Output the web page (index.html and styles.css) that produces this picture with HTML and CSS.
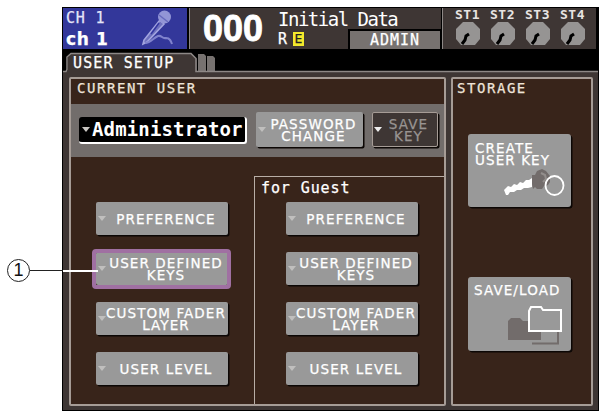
FILE: index.html
```html
<!DOCTYPE html>
<html lang="en">
<head>
<meta charset="utf-8">
<title>User Setup</title>
<link rel="stylesheet" href="styles.css">
</head>
<body>
<main class="screen">
  <header class="topbar">
    <section class="channel">
      <div><p class="ch-id">CH 1</p><p class="ch-name">ch 1</p></div>
      <svg class="mic" width="34" height="38" viewBox="0 0 34 38">
        <path d="M20 11 4 31l-1 4 4-2L24 15z" fill="#6d70bd" stroke="#a3a5e0" stroke-width="1.6"/>
        <path d="m19 14-8 11" stroke="#3336a0" stroke-width="1.5"/>
        <circle cx="24.500" cy="8" r="6.500" fill="#9295d6"/>
        <path d="m19 6 9 7" stroke="#6669bd" stroke-width="1.5"/>
        <path d="M5 34c6 0 8-5 13-7 4-1 4 3 8 2 4 0 5 3 6 6" fill="none" stroke="#8083cd" stroke-width="2"/>
      </svg>
    </section>
    <section class="scene">
      <div class="scene-no">000</div>
      <div class="scene-info">
        <p class="scene-title">Initial Data</p>
        <div class="scene-row"><span class="flag-r">R</span><span class="flag-e">E</span><span class="admin">ADMIN</span></div>
      </div>
    </section>
    <section class="stereo">
      <div class="st"><span>ST1</span><svg width="24" height="24" viewBox="0 0 24 24"><path class="knob" d="M7 0h10l7 7v10l-5 6H5l-5-6V7z"/><path class="needle" d="m13 12-3 2-1 4-3 4"/></svg></div>
      <div class="st"><span>ST2</span><svg width="24" height="24" viewBox="0 0 24 24"><path class="knob" d="M7 0h10l7 7v10l-5 6H5l-5-6V7z"/><path class="needle" d="m13 12-3 2-1 4-3 4"/></svg></div>
      <div class="st"><span>ST3</span><svg width="24" height="24" viewBox="0 0 24 24"><path class="knob" d="M7 0h10l7 7v10l-5 6H5l-5-6V7z"/><path class="needle" d="m13 12-3 2-1 4-3 4"/></svg></div>
      <div class="st"><span>ST4</span><svg width="24" height="24" viewBox="0 0 24 24"><path class="knob" d="M7 0h10l7 7v10l-5 6H5l-5-6V7z"/><path class="needle" d="m13 12-3 2-1 4-3 4"/></svg></div>
    </section>
  </header>
  <nav class="tabs">
    <svg class="tab-shape" width="535" height="21" viewBox="0 0 535 21">
      <path d="M0 20h3l2-2V5l3-4h120l6 6v13h401v1H0z" fill="#3e3634"/>
      <path d="M135 2h6l2 2v15h-8zM144 4h6l2 2v13h-8z" fill="#777270"/>
      <path d="M0 19.500h3l1-2V5l4-3.500h120l5 5v13h402" fill="none" stroke="#8d8886" stroke-width="1.500"/>
    </svg>
    <span class="tab-label">USER SETUP</span>
  </nav>
  <div class="body">
    <section class="panel current">
      <h2>CURRENT USER</h2>
      <div class="band">
        <div class="user-name"><i class="arrow"></i><span>Administrator</span></div>
        <button class="btn password"><i class="arrow"></i><span>PASSWORD<br>CHANGE</span></button>
        <button class="btn savekey"><i class="arrow"></i><span>SAVE<br>KEY</span></button>
      </div>
      <div class="columns">
        <div class="col own">
          <button class="btn"><i class="arrow"></i><span>PREFERENCE</span></button>
          <button class="btn selected"><i class="arrow"></i><span>USER DEFINED<br>KEYS</span></button>
          <button class="btn"><i class="arrow"></i><span>CUSTOM FADER<br>LAYER</span></button>
          <button class="btn"><i class="arrow"></i><span>USER LEVEL</span></button>
        </div>
        <div class="col guest">
          <h3>for Guest</h3>
          <button class="btn"><i class="arrow"></i><span>PREFERENCE</span></button>
          <button class="btn"><i class="arrow"></i><span>USER DEFINED<br>KEYS</span></button>
          <button class="btn"><i class="arrow"></i><span>CUSTOM FADER<br>LAYER</span></button>
          <button class="btn"><i class="arrow"></i><span>USER LEVEL</span></button>
        </div>
      </div>
    </section>
    <section class="panel storage">
      <h2>STORAGE</h2>
      <button class="btn tile"><span>CREATE<br>USER KEY</span>
        <svg width="62" height="30" viewBox="0 0 62 30">
          <path d="m1 21 4-4 3 1 3-3 3 1 3-3 3 1 3-3 3 0 3-2v9l-4 1-4 0-3 2-4 0-3 2-4 0-2 3H3z" fill="#fff"/>
          <path d="M29 6h3l2-4 5-2 4 2 4 5v6l-2 3-4 1-2 3h-5l-2-2-2 2-1-5z" fill="#726c6b"/>
          <path d="M38 4l4 2 1 4-3 3" stroke="#938e8c" stroke-width="2" fill="none"/>
          <ellipse cx="51.500" cy="16.500" rx="9" ry="9.500" fill="none" stroke="#fff" stroke-width="1.800"/>
        </svg>
      </button>
      <button class="btn tile load"><span>SAVE/LOAD</span>
        <svg width="56" height="40" viewBox="0 0 56 40">
          <path d="M25 37.500h26V24" fill="none" stroke="#726c6b" stroke-width="2"/>
          <path d="M1 34V15l3-3h9l3 3h18v19z" fill="#726c6b"/>
          <path d="M22 25V5l2-4h10l2 3h18v21z" fill="#999" stroke="#fff" stroke-width="2"/>
        </svg>
      </button>
    </section>
  </div>
</main>
<div class="callout"><span class="callout-no">1</span><i class="lead"></i><i class="lead-light"></i></div>
</body>
</html>
```

FILE: styles.css
```css
* { box-sizing: border-box; margin: 0; padding: 0; }
body { position: relative; width: 601px; height: 412px; overflow: hidden; background: #fff; color: #fff; font-family: "DejaVu Sans", sans-serif; }
svg { display: block; flex: none; }
.screen { width: 537px; height: 404px; margin: 7px 0 0 62px; padding: 1px 1px 1px; background: #000; display: flex; flex-direction: column; -webkit-text-stroke: 0.25px currentColor; }

.topbar { height: 41px; display: flex; flex: none; }
.channel { width: 124px; background: #33379a; display: flex; justify-content: space-between; padding: 0 13px 0 3px; font-family: "DejaVu Sans Mono", monospace; }
.ch-id { font-size: 15px; line-height: 20px; letter-spacing: 0.8px; color: #e4e4f8; }
.ch-name { font-family: "DejaVu Sans", sans-serif; font-weight: bold; font-size: 17px; line-height: 22px; letter-spacing: 0.6px; white-space: nowrap; }
.mic { margin-top: 1px; }
.scene { width: 252px; margin-left: 2px; border-left: 1px solid #8d8886; background: #3e3634; display: flex; padding-left: 13px; }
.scene-no { width: 75px; font: bold 36px/41px "Liberation Sans", sans-serif; letter-spacing: 0; -webkit-text-stroke: 0.8px #fff; }
.scene-info { flex: 1; font-family: "DejaVu Sans Mono", monospace; }
.scene-title { font-size: 19px; line-height: 22px; letter-spacing: -1.5px; height: 21px; white-space: nowrap; -webkit-text-stroke: 0; }
.scene-row { display: flex; height: 20px; }
.flag-r { width: 15px; font-size: 15px; line-height: 20px; }
.flag-e { width: 11px; height: 14px; margin-top: 3px; background: #f3e92c; color: #222; font-size: 13px; line-height: 14px; text-align: center; }
.admin { width: 93px; margin-left: auto; border: solid #000; border-width: 2px 1px 0 2px; background: #777270; font-size: 15px; line-height: 19px; letter-spacing: 1px; text-align: center; }
.stereo { width: 154px; margin-left: 1px; border-left: 1px solid #8d8886; background: #3e3634; display: flex; padding-left: 7px; }
.st { width: 35px; display: flex; flex-direction: column; align-items: center; letter-spacing: 0.5px; color: #e8e4e2; font-weight: bold; -webkit-text-stroke: 0; }
.st span { height: 14px; font-family: "DejaVu Sans Mono", monospace; font-size: 13px; line-height: 13px; }
.knob { fill: #969493; }
.needle { fill: none; stroke: #000; stroke-width: 3; }

.tabs { position: relative; height: 23px; padding-top: 3px; flex: none; }
.tab-label { position: absolute; left: 10px; top: 5px; font: 15px/19px "DejaVu Sans Mono", monospace; letter-spacing: 1.1px; }

.body { height: 338px; background: #3e3634; display: flex; gap: 5px; padding: 5px 4px 4px 6px; }
.panel { border: 2px solid #a69c96; border-radius: 2px; background: #38241a; }
.current { width: 377px; }
.storage { width: 142px; }
h2 { height: 25px; padding-left: 6px; color: #eee3d8; font: 14px/19px "DejaVu Sans Mono", monospace; letter-spacing: 1.55px; white-space: nowrap; }
.band { height: 53px; background: #726d6b; display: flex; align-items: flex-start; padding: 8px 0 0 8px; }
.user-name { width: 168px; height: 27px; margin-top: 5px; border: solid #fff; border-width: 0 2px 2px 0; border-radius: 3px; background: #000; display: flex; align-items: center; padding-left: 3px; gap: 2px; font: bold 19px/25px "DejaVu Sans Mono", monospace; letter-spacing: 0.15px; -webkit-text-stroke: 0; }
.user-name span { white-space: nowrap; width: 155px; }
.arrow { flex: none; width: 0; height: 0; border: solid transparent; border-width: 5px 4px 0; border-top-color: #c9c6c3; }

.btn { position: relative; flex: none; width: 132px; height: 33px; border: 0; border-radius: 2px; background: #999; box-shadow: 1.5px 1.500px 0 #0c0705; color: #fff; display: flex; align-items: center; padding-left: 2px; font: 13.500px/12px "DejaVu Sans", sans-serif; letter-spacing: 1.1px; text-align: center; }
.btn span { flex: 1; white-space: nowrap; margin: 0 0 0 -2px; }
.btn .arrow { border-top-color: #c0bfbe; }
.password { width: 107px; height: 35px; margin-left: 9px; }
.savekey { width: 66px; height: 35px; margin-left: 9px; border: 1.500px solid #a69c96; background: #3e3634; color: #999492; padding-left: 1px; }
.savekey .arrow { border-top-color: #eee; }
.columns { height: 247px; display: flex; }
.col { display: flex; flex-direction: column; gap: 17px; }
.own { width: 183px; padding: 45px 0 0 25px; }
.guest { width: 190px; height: 228px; margin-top: 19px; border: solid #b8aea6; border-width: 1px 0 0 1px; padding-left: 31px; }
h3 { height: 8px; margin-left: -25px; font: 15px/22px "DejaVu Sans Mono", monospace; letter-spacing: 0.9px; white-space: nowrap; }
.selected::before { content: ""; position: absolute; inset: -3px -3px -4px -4px; border: 4px solid #a070a2; border-radius: 4px; }

.storage { display: flex; flex-direction: column; }
.storage h2 { height: 55px; padding-left: 4px; }
.tile { width: 103px; height: 73px; margin-left: 15px; flex-direction: column; align-items: flex-start; justify-content: space-between; padding: 8px 6px 8px 7px; text-align: left; border-radius: 3px; }
.tile span { flex: none; margin: 0; }
.tile svg { align-self: flex-end; }
.load { margin-top: 70px; height: 74px; padding: 7px 8px 5px 6px; }

.callout { position: absolute; left: 7px; top: 259px; width: 92px; height: 23px; display: flex; align-items: center; }
.callout-no { width: 23px; height: 23px; border: 1px solid #222; border-radius: 50%; color: #111; font: 18px/21px "Liberation Sans", sans-serif; text-align: center; }
.lead { width: 33px; height: 1px; background: #222; }
.lead-light { width: 35px; height: 2px; background: #fff; }
```
